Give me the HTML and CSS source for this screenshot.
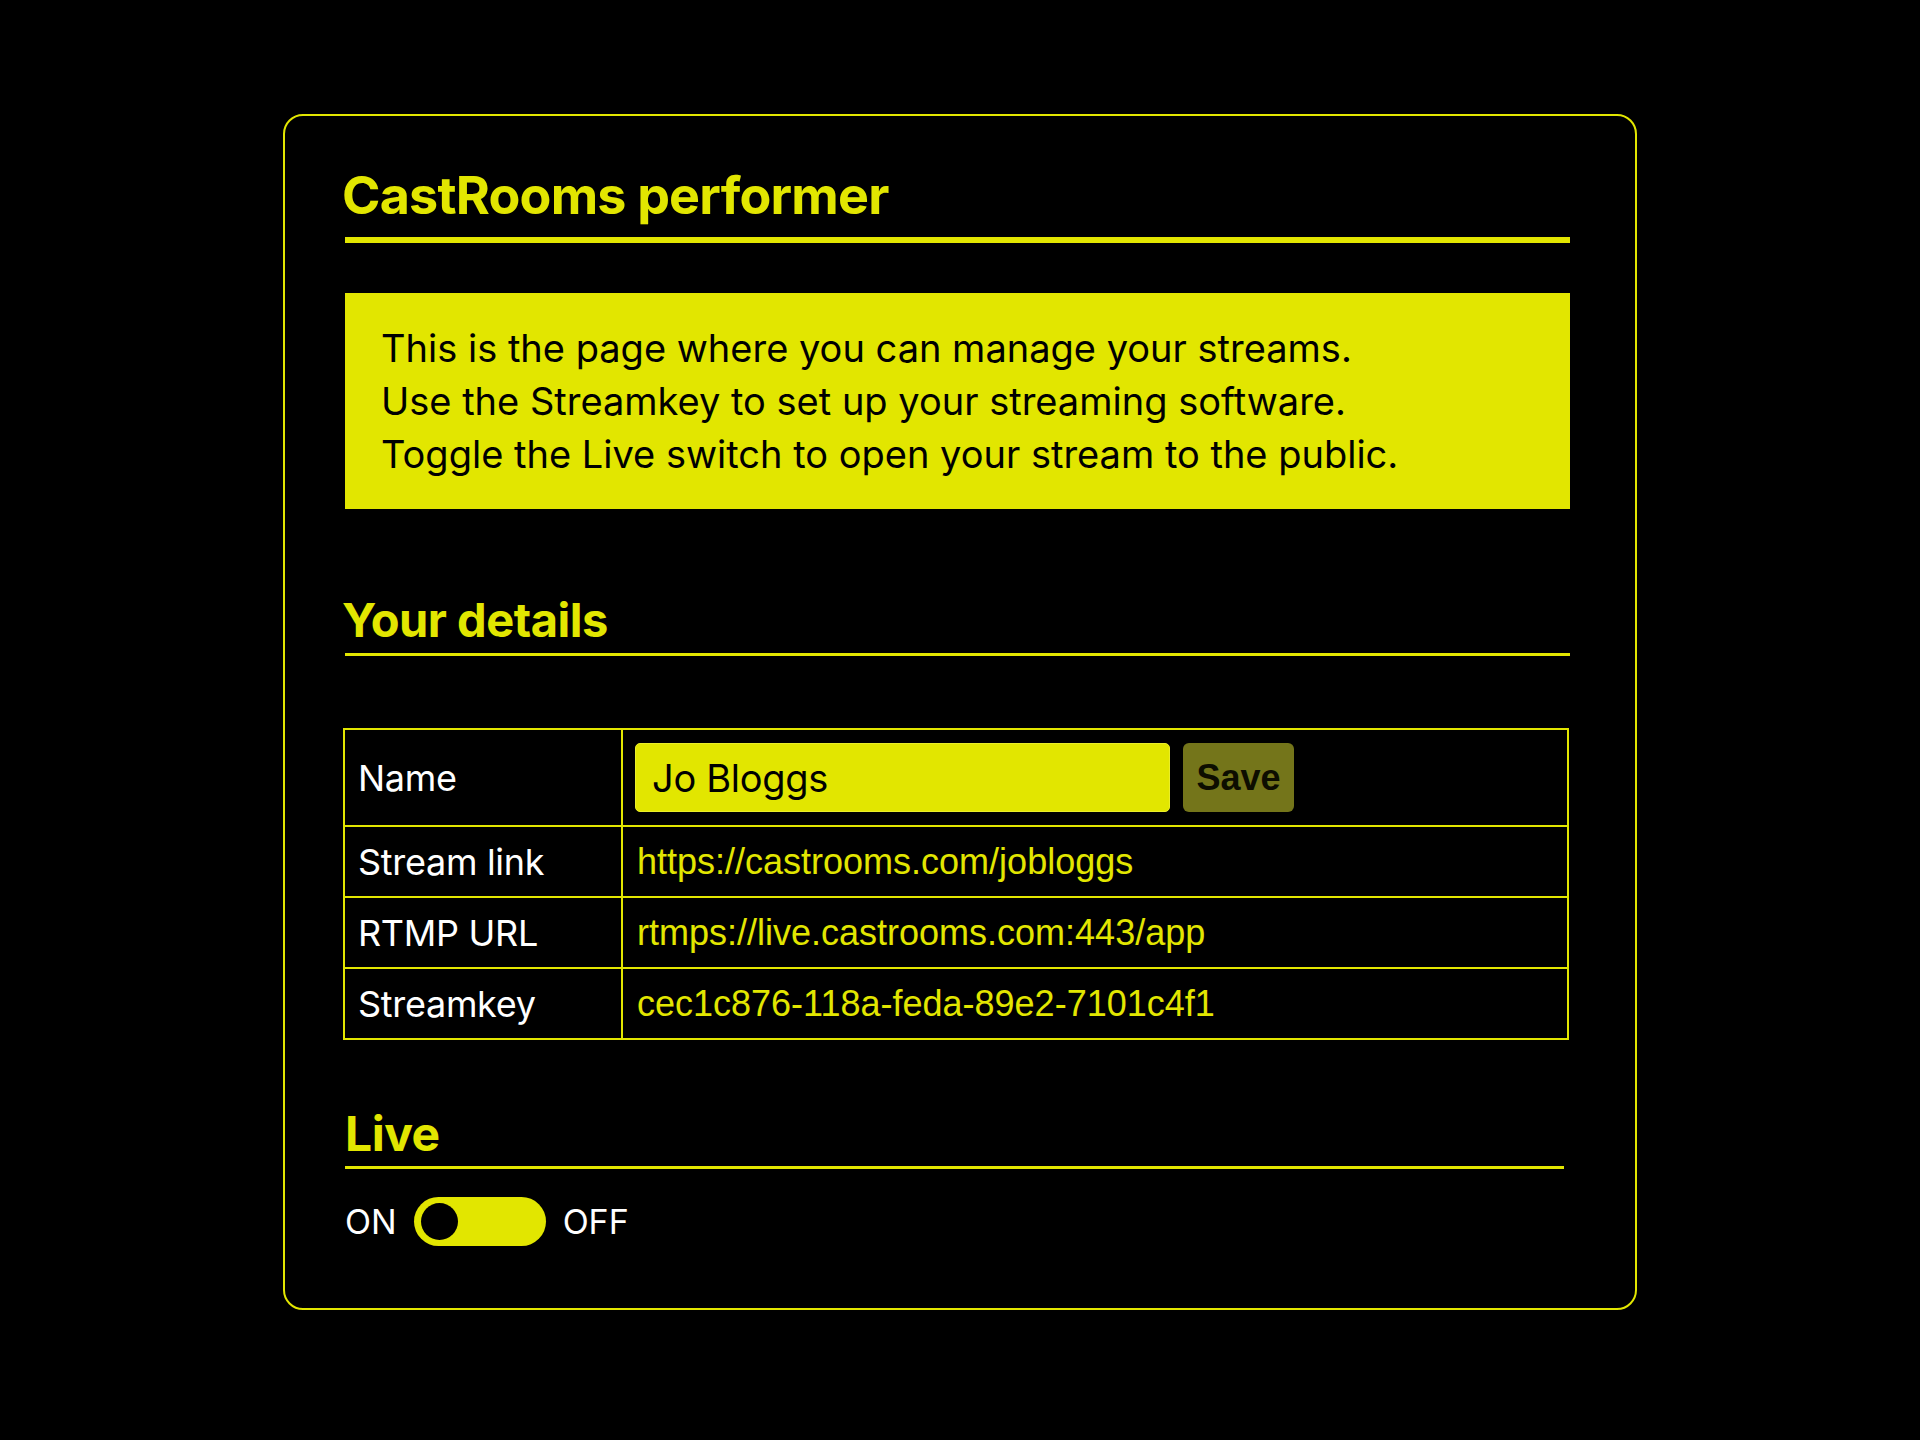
FILE: index.html
```html
<!DOCTYPE html>
<html lang="en">
<head>
<meta charset="utf-8">
<title>CastRooms performer</title>
<link rel="stylesheet" href="styles.css">
</head>
<body>
<main class="card">
  <h1 class="title">CastRooms performer</h1>
  <div class="info">
    <p>This is the page where you can manage your streams.</p>
    <p>Use the Streamkey to set up your streaming software.</p>
    <p>Toggle the Live switch to open your stream to the public.</p>
  </div>

  <h2 class="section section-details">Your details</h2>
  <div class="details">
    <div class="label row-first">Name</div>
    <div class="value row-first">
      <input class="name-input" type="text" value="Jo Bloggs">
      <button class="save-btn" type="button">Save</button>
    </div>
    <div class="label">Stream link</div>
    <div class="value"><span class="val-text">https://castrooms.com/jobloggs</span></div>
    <div class="label">RTMP URL</div>
    <div class="value"><span class="val-text">rtmps://live.castrooms.com:443/app</span></div>
    <div class="label">Streamkey</div>
    <div class="value"><span class="val-text">cec1c876-118a-feda-89e2-7101c4f1</span></div>
  </div>

  <h2 class="section section-live">Live</h2>
  <div class="live-row">
    <span class="live-label">ON</span>
    <span class="switch"><span class="knob"></span></span>
    <span class="live-label">OFF</span>
  </div>
</main>
</body>
</html>
```

FILE: styles.css
```css
* { box-sizing: border-box; }

html, body {
  margin: 0;
  padding: 0;
  background: #000;
}

body {
  font-family: Inter, "Noto Sans", sans-serif;
  color: #fff;
}

.card {
  width: 1354px;
  margin: 114px auto 0;
  border: 2px solid #e2e600;
  border-radius: 20px;
  padding: 50px 65px 62px 60px;
}

.title {
  margin: 0;
  font-size: 52px;
  line-height: 60px;
  font-weight: 700;
  letter-spacing: -0.8px;
  color: #e2e600;
  padding-bottom: 11px;
  border-bottom: 6px solid #e2e600;
  text-indent: -3px;
}

.info {
  margin-top: 50px;
  background: #e2e600;
  color: #000;
  padding: 29px 36px 28px;
}

.info p {
  margin: 0;
  font-size: 38px;
  line-height: 53px;
}

.section {
  margin: 0;
  font-weight: 700;
  color: #e2e600;
  border-bottom: 3px solid #e2e600;
  letter-spacing: -0.5px;
}

.section-details {
  margin-top: 83px;
  font-size: 47px;
  line-height: 56px;
  padding-bottom: 5px;
  text-indent: -3px;
}

.details {
  margin-top: 72px;
  margin-left: -2px;
  width: 1226px;
  display: grid;
  grid-template-columns: 276px 1fr;
  grid-template-rows: 95px 71px 71px 71px;
  border: 2px solid #e2e600;
}

.label, .value {
  border-top: 2px solid #e2e600;
  display: flex;
  align-items: center;
}

.row-first { border-top: 0; }

.label {
  padding-left: 13px;
  font-size: 36px;
  color: #fff;
  letter-spacing: -0.3px;
}

.value {
  border-left: 2px solid #e2e600;
  padding-left: 12px;
}

.value.row-first {
  gap: 13px;
}

.val-text {
  padding-left: 2px;
  font-family: "Liberation Sans", Arial, sans-serif;
  font-size: 36px;
  color: #e2e600;
}

.name-input {
  width: 535px;
  height: 69px;
  margin: 0;
  padding: 0 0 0 16px;
  border: 1px solid #eaee2a;
  border-radius: 5px;
  background: #e2e600;
  color: #000;
  font-family: Inter, "Noto Sans", sans-serif;
  font-size: 38px;
  letter-spacing: -0.3px;
  outline: none;
}

.save-btn {
  width: 111px;
  height: 69px;
  margin: 0;
  padding: 0;
  border: 0;
  border-radius: 6px;
  background: #74751a;
  color: #0d0d00;
  font-family: "Liberation Sans", Arial, sans-serif;
  font-weight: 700;
  font-size: 36px;
}

.section-live {
  margin-top: 68px;
  margin-right: 6px;
  font-size: 48px;
  line-height: 52px;
  padding-bottom: 6px;
}

.live-row {
  margin-top: 28px;
  display: flex;
  align-items: center;
  gap: 17px;
}

.live-label {
  font-size: 34px;
  color: #fff;
  line-height: 49px;
}

.switch {
  width: 132px;
  height: 49px;
  border-radius: 25px;
  background: #e2e600;
  display: flex;
  align-items: center;
  padding-left: 7px;
}

.knob {
  width: 37px;
  height: 37px;
  border-radius: 50%;
  background: #000;
}
```
